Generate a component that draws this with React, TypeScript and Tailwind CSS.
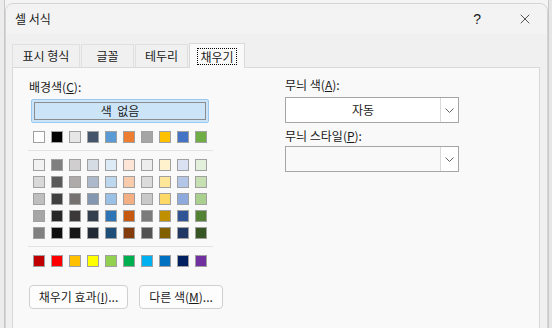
import { X } from "lucide-react";

const themeRow = ["#ffffff", "#000000", "#e7e6e6", "#44546a", "#5b9bd5", "#ed7d31", "#a5a5a5", "#ffc000", "#4472c4", "#70ad47"];

const tintRows = [
    ["#f2f2f2", "#7f7f7f", "#d0cece", "#d6dce4", "#ddebf7", "#fce4d6", "#ededed", "#fff2cc", "#d9e1f2", "#e2efda"],
    ["#d9d9d9", "#595959", "#aeaaaa", "#acb9ca", "#bdd7ee", "#f8cbad", "#dbdbdb", "#ffe699", "#b4c6e7", "#c6e0b4"],
    ["#bfbfbf", "#404040", "#757171", "#8497b0", "#9bc2e6", "#f4b084", "#c9c9c9", "#ffd966", "#8ea9db", "#a9d08e"],
    ["#a6a6a6", "#262626", "#3a3838", "#333f4f", "#2f75b5", "#c65911", "#7b7b7b", "#bf8f00", "#305496", "#548235"],
    ["#808080", "#0d0d0d", "#161616", "#222b35", "#1f4e78", "#833c0c", "#525252", "#806000", "#203764", "#375623"],
];

const standardRow = ["#c00000", "#ff0000", "#ffc000", "#ffff00", "#92d050", "#00b050", "#00b0f0", "#0070c0", "#002060", "#7030a0"];

const Swatches = ({ colors }: { colors: string[] }) => (
    <div className="flex gap-[6px] ml-[4px]">
        {colors.map((c, i) => (
            <div key={i} className="w-[12px] h-[12px] border border-[#a0a0a0]" style={{ backgroundColor: c }} />
        ))}
    </div>
);

const Chevron = () => (
    <svg width="9" height="5" viewBox="0 0 9 5" fill="none">
        <path d="M0.5 0.5 L4.5 4.5 L8.5 0.5" stroke="#606060" strokeWidth="1" />
    </svg>
);

const Combo = ({ value, disabled }: { value?: string; disabled?: boolean }) => (
    <div className={`flex w-[174px] h-[26px] border border-[#a5a5a5] ${disabled ? "bg-[#f9f9f9]" : "bg-white"}`}>
        <div className="flex-1 flex items-center justify-center text-[12px] text-[#1a1a1a]">{value}</div>
        <div className="w-[18px] flex items-center justify-center border-l border-[#d9d9d9] bg-white">
            <Chevron />
        </div>
    </div>
);

const tabs = ["표시 형식", "글꼴", "테두리", "채우기"];
const tabWidths = ["w-[68px]", "w-[53px]", "w-[53px]", "w-[56px]"];

const App = () => {
    return (
        <div className="w-[552px] h-[328px] overflow-hidden bg-[#f4f4f4] flex" style={{ fontFamily: '"Noto Sans CJK KR", "Noto Sans", sans-serif' }}>
            <div className="w-[5px] h-full bg-[#ececec] border-r border-[#c8c8c8]" />
            <div className="w-[543px] mt-[3px] h-[340px] bg-[#f0f0f0] rounded-t-[8px] border border-[#d4d4d4] flex flex-col">
                <div className="h-[30px] flex items-center bg-[#f3f3f3] rounded-t-[8px] pl-[9px] pr-[14px]">
                    <span className="text-[12px] text-[#1a1a1a]">셀 서식</span>
                    <span className="ml-auto text-[14px] text-[#1a1a1a] mr-[36px]" style={{ fontFamily: '"Liberation Sans", sans-serif' }}>?</span>
                    <X size={16} strokeWidth={1.1} color="#1a1a1a" />
                </div>
                <div className="flex items-end pl-[6px] mt-[9px] h-[25px] relative z-10">
                    {tabs.map((t, i) => (
                        <div
                            key={t}
                            className={`${tabWidths[i]} flex items-center justify-center text-[12px] text-[#1a1a1a] ${
                                i === 3
                                    ? "h-[25px] bg-[#f9f9f9] border border-b-0 border-[#dadada]"
                                    : "h-[23px] bg-[#f0f0f0] border border-b-0 border-[#e0e0e0] mr-[1px] mb-[1px]"
                            }`}
                        >
                            <span className={i === 3 ? "border border-dotted border-black px-[2px] leading-[15px]" : ""}>{t}</span>
                        </div>
                    ))}
                </div>
                <div className="ml-[6px] mt-[-1px] w-[528px] flex-1 bg-[#f9f9f9] border border-[#dadada] flex pl-[16px] text-[12px] text-[#1a1a1a]">
                    <div className="w-[184px] flex flex-col">
                        <div className="mt-[11px] leading-[16px]">
                            배경색(<span className="underline">C</span>):
                        </div>
                        <div className="mt-[4px] ml-[2px] w-[178px] h-[24px] bg-[#cce4f7] border border-[#99c9ef] rounded-[2px] p-[2px]">
                            <div className="w-full h-full border border-[#8c8c8c] flex items-center justify-center">색&nbsp;&nbsp;없음</div>
                        </div>
                        <div className="mt-[8px]">
                            <Swatches colors={themeRow} />
                        </div>
                        <div className="mt-[7px] h-px bg-[#e3e3e3] -ml-px" />
                        <div className="mt-[8px] flex flex-col gap-[5px]">
                            {tintRows.map((r, i) => (
                                <Swatches key={i} colors={r} />
                            ))}
                        </div>
                        <div className="mt-[7px] h-px bg-[#e3e3e3] -ml-px" />
                        <div className="mt-[8px]">
                            <Swatches colors={standardRow} />
                        </div>
                        <div className="mt-[18px] flex gap-[11px]">
                            <button className="shrink-0 w-[99px] h-[24px] bg-[#fdfdfd] border border-[#d0d0d0] rounded-[4px] text-[12px]">
                                채우기 효과(<span className="underline">I</span>)...
                            </button>
                            <button className="shrink-0 w-[84px] h-[24px] bg-[#fdfdfd] border border-[#d0d0d0] rounded-[4px] text-[12px]">
                                다른 색(<span className="underline">M</span>)...
                            </button>
                        </div>
                    </div>
                    <div className="ml-[72px] flex flex-col">
                        <div className="mt-[9px] leading-[16px]">
                            무늬 색(<span className="underline">A</span>):
                        </div>
                        <div className="mt-[4px]">
                            <Combo value="자동" />
                        </div>
                        <div className="mt-[5px] leading-[16px]">
                            무늬 스타일(<span className="underline">P</span>):
                        </div>
                        <div className="mt-[2px]">
                            <Combo disabled />
                        </div>
                    </div>
                </div>
            </div>
            <div className="flex-1 h-full bg-[#e6e6e6] border-l border-[#c8c8c8]" />
        </div>
    );
};

export default App;
